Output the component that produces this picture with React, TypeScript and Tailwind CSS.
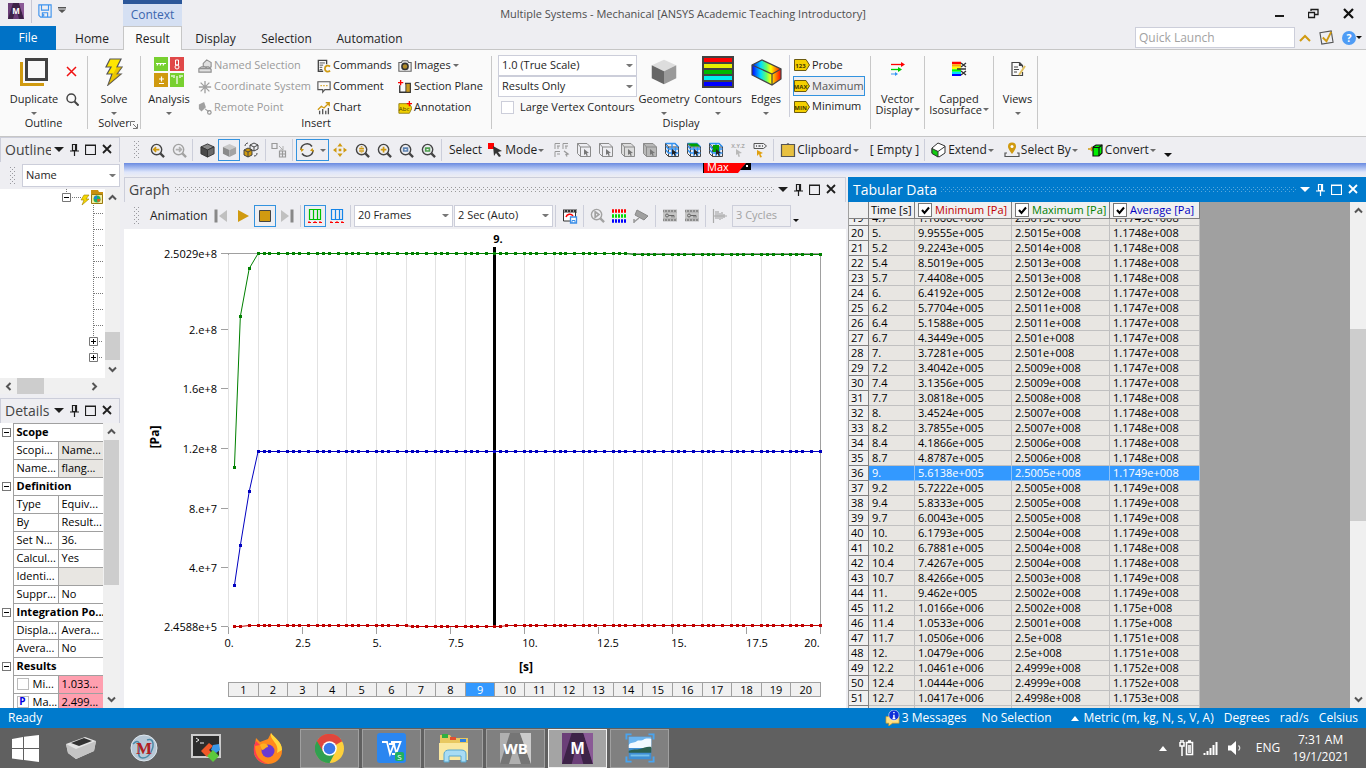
import React from "react";

type Kids = { children?: React.ReactNode };

/* ---------- small shared pieces ---------- */

const Caret = ({ c = "#6b6b6b", w = 6 }: { c?: string; w?: number }) => (
  <svg width={w} height={w / 2} viewBox="0 0 6 3" className="shrink-0" aria-hidden="true">
    <path d="M0 0h6L3 3z" fill={c} />
  </svg>
);

const Svg = ({ s = 16, w, h, vb, children }: Kids & { s?: number; w?: number; h?: number; vb?: string }) => (
  <svg width={w ?? s} height={h ?? s} viewBox={vb ?? "0 0 16 16"} fill="none" className="shrink-0" aria-hidden="true">
    {children}
  </svg>
);

const Grip = () => (
  <Svg w={5} h={18} vb="0 0 5 18">
    {[1, 5, 9, 13, 17].map((y) => (
      <path key={y} d={`M0 ${y - 0.5}h1M4 ${y - 0.5}h1M2 ${y + 1.5}h1`} stroke="#9a9aa0" />
    ))}
  </Svg>
);

const VSep = () => <div className="h-[22px] w-px shrink-0 bg-[#ccceda]" />;

const Pin = ({ c }: { c: string }) => (
  <Svg w={9} h={13} vb="0 0 9 13">
    <path d="M2.500 1.500h4v6h-4zM5.500 1v7M0 8h9M4.500 8v5" stroke={c} strokeWidth="1.200" />
  </Svg>
);

const Dots = ({ c }: { c: string }) => (
  <svg className="h-[5px] min-w-0 flex-1" aria-hidden="true">
    <defs>
      <pattern id={"d" + c.slice(1)} width="4" height="4" patternUnits="userSpaceOnUse">
        <path d="M0 .5h1M2 2.500h1" stroke={c} />
      </pattern>
    </defs>
    <rect width="100%" height="5" fill={`url(#d${c.slice(1)})`} />
  </svg>
);

const WinButtons = ({ c }: { c: string }) => (
  <div className="flex shrink-0 items-center gap-[6px]">
    <button aria-label="Panel menu"><Caret c={c} w={10} /></button>
    <button aria-label="Pin panel"><Pin c={c} /></button>
    <button aria-label="Maximize panel">
      <Svg w={11} h={11} vb="0 0 11 11"><path d="M.5 1.500h10v9H.5zM0 1h11" stroke={c} strokeWidth="1.200" /></Svg>
    </button>
    <button aria-label="Close panel">
      <Svg w={10} h={10} vb="0 0 10 10"><path d="M1 1l8 8M9 1L1 9" stroke={c} strokeWidth="1.800" /></Svg>
    </button>
  </div>
);

const Chev = ({ r = 0 }: { r?: number }) => (
  <Svg w={9} h={9} vb="0 0 9 9">
    <path d="M1 6.500L4.500 3 8 6.500" stroke="#555" strokeWidth="2" transform={`rotate(${r} 4.5 4.5)`} />
  </Svg>
);

/* ---------- icons ---------- */

const MLogo = ({ s }: { s: number }) => (
  <Svg s={s}>
    <rect width="16" height="16" fill="#6b3f78" />
    <path d="M5 0h6l5 16h-5L8 5 5 16H0z" fill="#3d2347" />
    <path d="M11 0h5v16z" fill="#8a5a96" />
    <text x="8" y="11" fontSize="8" fontWeight="700" textAnchor="middle" fill="#fff">M</text>
  </Svg>
);

const Cube = ({ s = 16, a = "#ddd", b = "#666", c = "#999", st = "none" }: { s?: number; a?: string; b?: string; c?: string; st?: string }) => (
  <Svg s={s}>
    <path d="M8 1l7 3.200L8 7.500 1 4.200z" fill={a} stroke={st} />
    <path d="M1 4.200l7 3.300V15l-7-3.500z" fill={b} stroke={st} />
    <path d="M15 4.200L8 7.500V15l7-3.500z" fill={c} stroke={st} />
  </Svg>
);

const Mag = ({ c = "#444", g = "", m = "#d09a10" }: { c?: string; g?: string; m?: string }) => (
  <Svg s={15}>
    <circle cx="7" cy="7" r="5.500" stroke={c} strokeWidth="1.500" />
    <path d="M11 11l4 4" stroke={c} strokeWidth="2.500" />
    {g && <path d={g} stroke={m} strokeWidth="1.800" />}
  </Svg>
);

const Frame = ({ fill = "none", c = "#8b8b8b", blue = false, green = "" }: { fill?: string; c?: string; blue?: boolean; green?: string }) => (
  <Svg>
    <path d="M1.500 1.500h9.500l3.500 3.500v9.500h-10l-3-3z" fill={fill} stroke={c} />
    <path d="M1.500 1.500l3 3.500h10M4.500 5v9.500" stroke={c} />
    {blue && <path d="M8 2v12M11.500 5v9M2 4l2.500 3h10M2 8l2.500 3h10M1.500 1.500H11l3.500 3.500" stroke="#3393f3" strokeWidth="1.400" />}
    {green && <path d={green} fill="#00a000" />}
    <path d="M8 7l5 4-2.200.300 1 2.200-1.200.500-1-2.200L8 13z" fill={blue ? "#222" : "#777"} />
  </Svg>
);

const Tag = ({ t }: { t: string }) => (
  <Svg w={16} h={12} vb="0 0 16 12">
    <path d="M.5.5h11.500l3.500 5.500-3.500 5.500H.5z" fill="#f5d000" stroke="#6b5a10" />
    <text x="6.500" y="8.500" fontSize="6" fontWeight="700" textAnchor="middle" fill="#443600">{t}</text>
  </Svg>
);

const Arrowed = ({ blue }: { blue?: boolean }) => (
  <Svg>
    <path d="M2.500 1.500h11v10h-11zM6.500 1v11M10.500 1v11" stroke={blue ? "#1484e8" : "#00c000"} strokeWidth="1.200" />
    <path d="M1 14.500h3M6 14.500h4M12 14.500h3M2 13v2M8 13v2M13 13v2" stroke="#f00" />
  </Svg>
);

const Film = ({ c = "#8c8c8c", save = false }: { c?: string; save?: boolean }) => (
  <Svg>
    {save ? (
      <>
        <path d="M1.500 2v11h12V2" fill="#fff" stroke={c} />
        <path d="M1 3h14" stroke={c} strokeWidth="3" />
        <path d="M2 3h13" stroke="#fff" strokeWidth="1" strokeDasharray="1 2" />
        <path d="M4 9c1-3 5-4 7-1" stroke="#f00" strokeWidth="1.500" />
        <path d="M8.500 9h6v6h-6z" fill="#fff" stroke="#3d8fe8" strokeWidth="1.300" />
        <path d="M10 15v-2.500h3V15" stroke="#3d8fe8" />
      </>
    ) : (
      <>
        <rect x="1" y="2" width="14" height="11" fill="#c4c4c4" />
        <path d="M1 3h14M1 12h14" stroke={c} strokeWidth="2.500" />
        <path d="M2 3h13M2 12h13" stroke="#e8e8e8" strokeWidth="1" strokeDasharray="1 2" />
        <circle cx="5" cy="7.500" r="1.500" stroke="#666" />
        <path d="M6.500 7.500H12v2M10 7.500v2" stroke="#666" />
      </>
    )}
  </Svg>
);

/* ---------- title bar and tabs ---------- */

function TitleBar() {
  return (
    <header className="shrink-0 bg-[#eeeef2]">
      <div className="flex h-[26px]">
        <div className="flex w-[182px] shrink-0 items-start">
          <div className="ml-2 mt-[3px]"><MLogo s={16} /></div>
          <div className="ml-[7px] h-[23px] w-px bg-[#c8c8d4]" />
          <button aria-label="Save" className="ml-[6px] mt-1">
            <Svg s={14}><path d="M1 1h14v14H3l-2-2zM4 1v6h8V1M5 15v-5h6v5M6.500 11v3" stroke="#3d93ee" strokeWidth="1.300" /></Svg>
          </button>
          <button aria-label="Customize" className="ml-[6px] mt-[7px]">
            <Svg w={8} h={6} vb="0 0 8 6"><path d="M0 0h8v1.500H0zM0 2.500h8L4 6z" fill="#555" /></Svg>
          </button>
          <div className="ml-auto flex h-full w-[59px] items-center justify-center border-t-4 border-[#2b579a] bg-[#d5e0f3] text-[12px] text-[#3b66ae]">Context</div>
        </div>
        <h1 className="flex-1 truncate text-center text-[11px] leading-[28px] text-[#4d4d4d]">
          Multiple Systems - Mechanical [ANSYS Academic Teaching Introductory]
        </h1>
        <div className="flex w-[182px] shrink-0 items-center justify-end gap-6 pr-3">
          <button aria-label="Minimize"><Svg w={9} h={10} vb="0 0 9 10"><path d="M0 8h9" stroke="#1b1b1b" strokeWidth="2" /></Svg></button>
          <button aria-label="Restore"><Svg w={11} h={11} vb="0 0 11 11"><path d="M.5 4.500h6v5h-6zM0 4.500h7M3 3V1.500h7v5H7M3 1.500h7" stroke="#1b1b1b" strokeWidth="1.300" /></Svg></button>
          <button aria-label="Close"><Svg w={11} h={11} vb="0 0 11 11"><path d="M1 1l9 9M10 1l-9 9" stroke="#111" strokeWidth="2.200" /></Svg></button>
        </div>
      </div>
      <nav className="flex h-6 items-stretch text-[12px] text-[#1e1e1e]">
        <button className="w-14 bg-[#0072c6] text-white">File</button>
        <button className="w-[67px] border-b border-[#c6c6c6] pt-[2px] pl-[5px]">Home</button>
        <button className="w-[59px] border border-b-0 border-[#c6c6c6] bg-[#fafafa]">Result</button>
        <button className="w-[67px] border-b border-[#c6c6c6] pt-[2px]">Display</button>
        <button className="w-[75px] border-b border-[#c6c6c6] pt-[2px]">Selection</button>
        <button className="w-[91px] border-b border-[#c6c6c6] pt-[2px]">Automation</button>
        <div className="flex flex-1 items-center justify-end border-b border-[#c6c6c6] pr-1">
          <input aria-label="Quick Launch" placeholder="Quick Launch" className="h-[21px] w-[160px] border border-[#ccceda] bg-white px-[3px] text-[12px] placeholder:text-[#a2a2a2]" />
          <button aria-label="Collapse ribbon" className="ml-1"><Svg w={12} h={8} vb="0 0 12 8"><path d="M1 7l5-5 5 5" stroke="#d09a10" strokeWidth="2" /></Svg></button>
          <button aria-label="Options" className="ml-2">
            <Svg s={15}><path d="M1 3l12-2 2 12-12 2z" stroke="#555" strokeWidth="1.200" /><path d="M4 8l4 4 5-10" stroke="#d09a10" strokeWidth="2" /></Svg>
          </button>
          <button aria-label="Help" className="ml-2 flex items-center">
            <Svg s={14}><circle cx="8" cy="8" r="8" fill="#4f9cf5" /><text x="8" y="12.500" fontSize="12" fontWeight="700" textAnchor="middle" fill="#fff">?</text></Svg>
            <Caret c="#111" w={6} />
          </button>
        </div>
      </nav>
    </header>
  );
}

/* ---------- ribbon ---------- */

const Group = ({ w, label, launcher, children }: Kids & { w: string; label?: string; launcher?: boolean }) => (
  <section className={"flex shrink-0 flex-col border-r border-[#c8c8c8] " + w}>
    <div className="flex h-[61px] shrink-0">{children}</div>
    {label && (
      <div className="relative text-center text-[11px] leading-3">
        {label}
        {launcher && (
          <span className="absolute right-[2px] bottom-0">
            <Svg s={8} vb="0 0 8 8"><path d="M.5 5V.5H5M3 3l4 4M7.500 3v4.500H3" stroke="#777" /></Svg>
          </span>
        )}
      </div>
    )}
  </section>
);

const Big = ({ icon, label, w }: { icon: React.ReactNode; label: string; w: string }) => (
  <button className={"flex shrink-0 flex-col items-center text-[11px] leading-[14px] " + w}>
    <span className="flex h-8 items-center">{icon}</span>
    <span className="mt-1 whitespace-nowrap">{label}</span>
    <span className="mt-[6px]"><Caret /></span>
  </button>
);

const Two = ({ icon, a, b }: { icon: React.ReactNode; a: string; b: string }) => (
  <button className="flex w-full flex-col items-center text-[11px] leading-[11px]">
    <span className="flex h-[26px] items-center">{icon}</span>
    <span className="mt-[11px]">{a}</span>
    <span className="flex items-center gap-px">{b}<Caret /></span>
  </button>
);

const Small = ({ icon, label, off, on, drop }: { icon: React.ReactNode; label: string; off?: boolean; on?: boolean; drop?: boolean }) => (
  <button className={"flex h-[21px] items-center gap-[2px] border text-[11px] whitespace-nowrap " + (off ? "text-[#9b9b9b] " : "text-[#1e1e1e] ") + (on ? "border-[#3393df] bg-[#eeeef2] !text-[#555]" : "border-transparent")}>
    {icon}
    {label}
    {drop && <Caret />}
  </button>
);

const Combo = ({ v, w, label, off }: { v: string; w: string; label: string; off?: boolean }) => (
  <div className={"relative flex shrink-0 items-center " + w}>
    <select aria-label={label} disabled={off} className={"h-full w-full appearance-none border border-[#ccceda] px-[3px] text-[11px] " + (off ? "bg-[#eeeef2] text-[#a2a2a2]" : "bg-white text-[#1e1e1e]")}>
      <option>{v}</option>
    </select>
    {!off && <span className="pointer-events-none absolute right-1"><Caret c="#777" w={7} /></span>}
  </div>
);

function Ribbon() {
  return (
    <div className="flex h-[87px] shrink-0 overflow-hidden border-b border-[#c6c6c6] bg-[#fafafa] pt-[6px] pb-[7px] text-[#1e1e1e]">
      <Group w="w-[88px]" label="Outline">
        <Big w="w-[60px] pl-2" label="Duplicate" icon={
          <Svg w={28} h={28} vb="0 0 28 28"><path d="M1.500 4v22.500H24" stroke="#d09a10" strokeWidth="3" /><rect x="6.500" y="1.500" width="20" height="20" fill="#fafafa" stroke="#424242" strokeWidth="3" /></Svg>} />
        <div className="flex flex-col gap-4 pt-[10px] pl-[6px]">
          <button aria-label="Delete"><Svg w={12} h={11} vb="0 0 12 11"><path d="M1 1l9 9M10 1l-9 9" stroke="#f01010" strokeWidth="1.500" /></Svg></button>
          <button aria-label="Find"><Svg s={13}><circle cx="6.500" cy="6.500" r="5.300" stroke="#444" strokeWidth="1.800" /><path d="M10.500 10.500l5 5" stroke="#444" strokeWidth="2.500" /></Svg></button>
        </div>
      </Group>
      <Group w="w-[53px]" label="Solver" launcher>
        <Big w="w-full" label="Solve" icon={
          <Svg w={18} h={28} vb="0 0 18 28"><path d="M5 1h11l-4 8h5l-5 7h4L3 27l4-11H2l4-7H1z" fill="#ffe600" stroke="#555" strokeWidth="1.200" /><path d="M12 9h5l-5 7h4L3 27l5-11z" fill="#d8a800" opacity=".5" /></Svg>} />
      </Group>
      <Group w="w-[351px]" label="Insert">
        <Big w="w-14" label="Analysis" icon={
          <Svg w={30} h={30} vb="0 0 30 30">
            <path d="M0 0h14v14H0z" fill="#78d030" /><path d="M16 0h14v14H16z" fill="#e04848" /><path d="M0 16h14v14H0z" fill="#d09a10" /><path d="M16 16h14v14H16z" fill="#78d030" />
            <path d="M2 6.500h10M3 8.500l1-2M6 8.500l1-2M9 8.500l1-2M5 22h5M7.500 19.500v5M5 26.500h5M23 19v8M20 18v3M26 18v3M18 18v2M28 18v2" stroke="#fff" strokeWidth="1.200" />
            <path d="M21.500 3h3v5h-3z" stroke="#fff" /><circle cx="23" cy="10" r="2" stroke="#fff" />
          </Svg>} />
        <div className="-mt-px w-[119px] text-left">
          <Small off label="Named Selection" icon={<Svg s={14}><path d="M1 15v-4l3-2h8l3 3v3zM1 11h14M6 5l4-4 5 3v5l-4 2-5-3z" stroke="#909090" strokeWidth="1.300" fill="#e0e0e0" /></Svg>} />
          <Small off label="Coordinate System" icon={<Svg s={14}><path d="M8 1v14M1 8h14M3 3l10 10M13 3L3 13" stroke="#a0a0a0" strokeWidth="1.500" /></Svg>} />
          <Small off label="Remote Point" icon={<Svg s={14}><path d="M1 4l6-3 2 6-5 5-3-3z" fill="#a0a0a0" /><path d="M8 9l4 3" stroke="#a0a0a0" strokeWidth="1.300" /><circle cx="13" cy="13" r="2" stroke="#909090" strokeWidth="1.300" /></Svg>} />
        </div>
        <div className="-mt-px w-[81px]">
          <Small label="Commands" icon={<Svg s={14}><path d="M7 14H1.500V1.500H11V6" stroke="#444" strokeWidth="1.500" /><path d="M3 4.500h6M3 7h4M3 9.500h3M3 12h3" stroke="#444" /><path d="M15 8.500c-3-2-6-.500-6 2.500s3 4.500 6 2.500" stroke="#d09a10" strokeWidth="2" /></Svg>} />
          <Small label="Comment" icon={<Svg s={14}><path d="M1 2h14v9H9l-2.500 3v-3H1z" stroke="#555" strokeWidth="1.300" /><path d="M4 6.500h1.500M7.200 6.500h1.500M10.500 6.500H12" stroke="#d09a10" strokeWidth="1.500" /></Svg>} />
          <Small label="Chart" icon={<Svg s={14}><path d="M3 15v-4M6.500 15V9M10 15v-4M13 15V8" stroke="#555" strokeWidth="1.500" /><path d="M1 10l4-4 3 2 6-6M10 2h4v4" stroke="#d09a10" strokeWidth="1.500" /></Svg>} />
        </div>
        <div className="-mt-px">
          <Small drop label="Images" icon={<Svg s={14}><path d="M1 4h3l1-2h6l1 2h3v10H1z" stroke="#666" strokeWidth="1.300" fill="#f4f4f4" /><circle cx="8" cy="8.500" r="3.500" fill="#b08a28" stroke="#333" strokeWidth="1.800" /></Svg>} />
          <Small label="Section Plane" icon={<Svg s={14}><path d="M2 6v8h12V4H8" stroke="#333" strokeWidth="1.500" /><path d="M9 4h5v10H9z" fill="#c89a20" stroke="#333" /><path d="M0 3h6M3 0v6" stroke="#f00" strokeWidth="1.500" /></Svg>} />
          <Small label="Annotation" icon={<Svg s={14}><path d="M1 3h12l3 5-3 6H1z" fill="#f0d000" stroke="#907a10" /><text x="7" y="11.500" fontSize="7" textAnchor="middle" fill="#443600">Abc</text><path d="M10 3h6M13 0v6" stroke="#f00" strokeWidth="1.500" /></Svg>} />
        </div>
      </Group>
      <Group w="w-[379px]" label="Display">
        <div className="-mt-px ml-[6px] w-[139px] shrink-0">
          <Combo label="Result scale" w="h-[21px]" v="1.0 (True Scale)" />
          <Combo label="Result set" w="h-[21px]" v="Results Only" />
          <label className="flex h-[21px] items-center gap-[6px] pl-[3px] text-[11px] whitespace-nowrap">
            <input type="checkbox" className="h-[13px] w-[13px] shrink-0 appearance-none border border-[#ccceda] bg-white" />
            Large Vertex Contours
          </label>
        </div>
        <Big w="w-[54px]" label="Geometry" icon={<Cube s={28} />} />
        <Big w="w-[54px]" label="Contours" icon={
          <Svg w={32} h={32} vb="0 0 32 32"><path d="M0 0h32v32H0z" fill="#424242" /><path d="M2 4h28" stroke="#f00" strokeWidth="4" /><path d="M2 10h28" stroke="#e8f000" strokeWidth="4" /><path d="M2 16h28" stroke="#00b800" strokeWidth="4" /><path d="M2 22h28" stroke="#00f0f0" strokeWidth="4" /><path d="M2 28h28" stroke="#00f" strokeWidth="4" /></Svg>} />
        <Big w="w-[42px]" label="Edges" icon={
          <Svg w={31} h={27} vb="0 0 31 27">
            <defs><linearGradient id="edg"><stop offset="0" stopColor="#00f" /><stop offset=".3" stopColor="#0df" /><stop offset=".5" stopColor="#6f6" /><stop offset=".65" stopColor="#ff0" /><stop offset="1" stopColor="#f00" /></linearGradient></defs>
            <path d="M1 6l10-5 19 9v10l-9 6-20-10z" fill="url(#edg)" stroke="#444" strokeWidth="1.200" /><path d="M1 6l20 9 9-5M21 15v11" stroke="#444" strokeWidth="1.200" />
          </Svg>} />
        <div className="ml-[2px] -mt-px flex flex-col border-l border-[#ccceda] pl-[3px]">
          <Small label="Probe" icon={<Tag t="123" />} />
          <Small on label="Maximum" icon={<Tag t="MAX" />} />
          <Small label="Minimum" icon={<Tag t="MIN" />} />
        </div>
      </Group>
      <Group w="w-[54px]">
        <Two a="Vector" b="Display" icon={<Svg><path d="M1 3.500h12" stroke="#f00" strokeWidth="1.300" /><path d="M11 1l4 2.500L11 6z" fill="#f00" /><path d="M1 8.500h8" stroke="#0c0" strokeWidth="1.300" /><path d="M8 6l4 2.500L8 11z" fill="#0c0" /><path d="M1 13h5" stroke="#3393f3" /><path d="M5 11l3 2-3 2z" fill="#3393f3" /></Svg>} />
      </Group>
      <Group w="w-[69px]">
        <Two a="Capped" b="Isosurface" icon={<Svg><path d="M1 2h9" stroke="#f00" strokeWidth="2.500" /><path d="M1 4.500h9" stroke="#fa0" strokeWidth="2.500" /><path d="M1 7h9" stroke="#ff0" strokeWidth="2.500" /><path d="M1 9.500h9" stroke="#0f0" strokeWidth="2.500" /><path d="M1 12h9" stroke="#0df" strokeWidth="2.500" /><path d="M1 14h9" stroke="#00f" strokeWidth="2" /><path d="M10 2l5 4M15 2l-5 4M10 10l5 4M15 10l-5 4M6 8h9" stroke="#333" strokeWidth="1.300" /></Svg>} />
      </Group>
      <Group w="w-[44px]">
        <Big w="w-full pl-1" label="Views" icon={<span className="pb-[6px]"><Svg><path d="M9.500 1.500H2v13h10.500V11M9.500 1.500l3 3M9.500 1.500v3h3v2M4 6h4M4 8.500h5M4 11h3" stroke="#444" strokeWidth="1.200" /><path d="M9 14l6-9" stroke="#e0c060" strokeWidth="2" /></Svg></span>} />
      </Group>
    </div>
  );
}

/* ---------- graphics toolbar ---------- */

const Tb = ({ icon, on, name }: { icon: React.ReactNode; on?: boolean; name: string }) => (
  <button aria-label={name} className={"flex h-[22px] w-[22px] shrink-0 items-center justify-center border " + (on ? "border-[#3393df]" : "border-transparent")}>
    {icon}
  </button>
);

const TextDrop = ({ icon, label, drop = true }: { icon?: React.ReactNode; label: string; drop?: boolean }) => (
  <button className="flex shrink-0 items-center gap-px text-[12px] whitespace-nowrap text-[#1e1e1e]">
    {icon}{label}{drop && <Caret />}
  </button>
);

function ViewToolbar() {
  return (
    <div className="flex h-[26px] shrink-0 items-center overflow-hidden bg-[#eeeef2] pl-[10px]">
      <Grip />
      <div className="w-[7px]" />
      <Tb name="Zoom previous" icon={<Mag g="M10 7H4M6.500 4.500L4 7l2.500 2.500" />} />
      <Tb name="Zoom next" icon={<Mag c="#a2a2a2" g="M4 7h6M7.500 4.500L10 7 7.500 9.500" m="#b0b0b0" />} />
      <div className="w-[2px]" /><VSep /><div className="w-[3px]" />
      <Tb name="Shaded exterior and edges" icon={<Cube s={15} a="#888" b="#4a4a4a" c="#6a6a6a" st="#333" />} />
      <Tb on name="Shaded exterior" icon={<Cube s={15} a="#c8c8c8" b="#8a8a8a" c="#a4a4a4" />} />
      <Tb name="Wireframe" icon={<Svg><path d="M7 3l4-2 4 2v4l-4 2-4-2zM7 3l4 2 4-2M11 5v4" stroke="#444" /><path d="M1 8l4-2 4 2v5l-4 2-4-2z" fill="#d09a10" stroke="#444" /><path d="M1 8l4 2 4-2M5 10v5M2 4c0-2 2-3 3-3M14 11c0 2-1 3-3 3" stroke="#444" /></Svg>} />
      <div className="w-[3px]" /><VSep /><div className="w-[2px]" />
      <Tb name="Manage views" icon={<Svg><path d="M1 1.500h5v5H1zM8.500 9h6v6h-6zM11.500 9v6M8.500 12h6" stroke="#999" strokeWidth="1.200" /><path d="M8 4l4 4M12 4v4H9" stroke="#b0b0b0" /></Svg>} />
      <div className="w-[2px]" /><VSep /><div className="w-[3px]" />
      <button aria-label="Rotate" className="flex h-[22px] w-[33px] shrink-0 items-center justify-between border border-[#3393df] px-[2px]">
        <Svg><path d="M2 8a6 6 0 0 1 11-3.500M14 8a6 6 0 0 1-11 3.500" stroke="#444" strokeWidth="1.500" /><path d="M1 6l1.500 4L5 7.500zM15 10l-1.500-4L11 8.500z" fill="#d09a10" /></Svg>
        <Caret />
      </button>
      <Tb name="Pan" icon={<Svg s={14}><path d="M8 0l3 4H5zM8 16l3-4H5zM0 8l4-3v6zM16 8l-4-3v6zM6.500 6.500h3v3h-3z" fill="#d09a10" /></Svg>} />
      <Tb name="Zoom" icon={<Mag g="M4.500 6h5M4.500 8.500h5M7 3.500v1M7 10v1" />} />
      <Tb name="Box zoom" icon={<Mag g="M4 7h6M7 4v6" />} />
      <Tb name="Fit" icon={<Mag g="M5 5.500h4v3H5z" m="#5d84b4" />} />
      <Tb name="Toggle magnifier" icon={<Mag g="M5 5.500h4v3H5z" m="#4fa04f" />} />
      <div className="w-[2px]" /><VSep /><div className="w-[7px]" />
      <span className="shrink-0 text-[12px] text-[#1e1e1e]">Select</span>
      <div className="w-[6px]" />
      <TextDrop label="Mode" icon={<Svg><path d="M0 1h6v6H0z" fill="#f00" /><path d="M5 4l9 5-4 1 3 4-2 1-3-4-2 3z" fill="#333" /></Svg>} />
      <div className="w-[7px]" />
      <Tb name="Smart select" icon={<Svg><path d="M1 7V1.500h5M9 7V1.500h5M1 15v-5.500h5M3 4h3M11 4h3M3 12h3M4 7V4M12 7V4" stroke="#999" /><path d="M10 9l4 3-2 .5 1 2" stroke="#999" strokeWidth="1.300" /></Svg>} />
      <Tb name="Vertex" icon={<Frame />} />
      <Tb name="Edge" icon={<Frame />} />
      <Tb name="Face" icon={<Frame fill="#dcdcdc" />} />
      <Tb name="Body" icon={<Frame fill="#b8b8b8" />} />
      <Tb name="Node" icon={<Frame c="#444" blue />} />
      <Tb name="Element face" icon={<Frame c="#444" blue green="M2 1.500h9l3 3H5z" />} />
      <Tb name="Element" icon={<Frame c="#444" blue green="M5 3h6v7H5z" />} />
      <Tb name="Coordinates" icon={<Svg><text x="8" y="5.500" fontSize="5.500" fontWeight="700" textAnchor="middle" fill="#aaa">X.Y.Z</text><path d="M6 7l6 4-3 .5 1 3-1.500.500-1-3L6 13z" fill="#b8b8b8" /></Svg>} />
      <Tb name="Label" icon={<Svg><path d="M2 1.500h9.500l3 2.500-3 2.500H2z" stroke="#555" /><path d="M4 4h1M6.500 4h2M10 4h1" stroke="#555" strokeWidth="1.500" /><path d="M5 8l6 3-2.500 1 1.500 3-2 .5L7 12l-2 2z" fill="#e0a010" /></Svg>} />
      <div className="w-[2px]" /><VSep /><div className="w-[6px]" />
      <TextDrop label="Clipboard" icon={<Svg><path d="M1.500 2.500h13v12h-13z" fill="#e8c040" stroke="#555" strokeWidth="1.200" /><path d="M5 3h6l-3-2z" fill="#555" /></Svg>} />
      <div className="w-[11px]" />
      <TextDrop label="[ Empty ]" drop={false} />
      <div className="w-[5px]" /><VSep /><div className="w-[6px]" />
      <TextDrop label="Extend" icon={<Svg><path d="M1 6l6-5 7 3v7l-6 4-7-4z" stroke="#333" fill="#fff" /><path d="M1 6.500l6 3V15l-6-3.500z" fill="#1c1" stroke="#333" /><path d="M7 9.500l7-5" stroke="#333" /></Svg>} />
      <div className="w-[10px]" />
      <TextDrop label="Select By" icon={<Svg><path d="M3 11H1v3.500h14V11h-2" stroke="#555" strokeWidth="1.200" /><path d="M8 12C4 7 4 5 4 4.500a4 4 0 0 1 8 0C12 5 12 7 8 12z" fill="#d09a10" /><circle cx="8" cy="4.500" r="1.500" fill="#fff" /></Svg>} />
      <div className="w-[10px]" />
      <TextDrop label="Convert" icon={<Svg><path d="M0 7h4M3 5l2 2-2 2" stroke="#d09a10" strokeWidth="1.300" /><path d="M5 5l3-2h6v8l-3 3H5z" fill="#0e0" stroke="#111" strokeWidth="1.200" /><path d="M5 5.500h6V14M11 5.500l3-2.500" stroke="#111" strokeWidth="1.200" /></Svg>} />
      <div className="w-[8px]" />
      <button aria-label="More tools" className="mt-[10px]"><Caret c="#111" w={8} /></button>
    </div>
  );
}

/* ---------- left side: outline and details ---------- */

const PanelHead = ({ title }: { title: string }) => (
  <div className="flex h-[25px] shrink-0 items-center border border-b-0 border-[#ccceda] bg-[#eeeef2] pb-[2px] pl-1 text-[#444]">
    <span className="w-[46px] shrink-0 overflow-hidden text-[14px] whitespace-nowrap">{title}</span>
    <div className="ml-[3px]"><WinButtons c="#1e1e1e" /></div>
  </div>
);

function OutlinePanel() {
  return (
    <div className="flex h-[257px] shrink-0 flex-col">
      <PanelHead title="Outline" />
      <div className="flex h-[27px] shrink-0 items-center bg-[#eeeef2] pl-[10px]">
        <Grip />
        <Combo label="Outline filter" w="ml-[7px] h-[23px] w-[98px]" v="Name" />
      </div>
      <div className="flex h-[189px] bg-white">
        <div className="flex-1">
          <svg width="104" height="189" viewBox="0 189 104 189" aria-hidden="true">
            <path d="M66.500 189v4M72 197.500h9M93.500 205v132M93.500 347v6M94 213.500h9M94 229.500h9M94 245.500h9M94 261.500h9M94 277.500h9M94 293.500h9M94 309.500h9M94 325.500h9M99 341.500h4M99 357.500h4" stroke="#777" strokeDasharray="1 1" />
            <path d="M62.500 193.500h8v8h-8zM89.500 337.500h8v8h-8zM89.500 353.500h8v8h-8z" fill="#fff" stroke="#777" />
            <path d="M64 197.500h5M91 341.500h5M91 357.500h5M93.500 339v5M93.500 355v5" stroke="#000" />
            <path d="M84 195h5l-3 4h3l-7 6 2-5h-3z" fill="#f5d800" stroke="#a08000" strokeWidth=".6" />
            <path d="M91 190h7l1 2h4v4H91z" fill="#c89010" />
            <path d="M91.500 194.500h11v9h-11z" fill="#f5eca0" stroke="#9a7a10" />
            <circle cx="97" cy="199" r="3.500" fill="#20b060" /><path d="M94 199a3 3 0 0 1 3-3.500v3.500z" fill="#2080e0" /><path d="M97 199h3.500a3 3 0 0 1-3 3z" fill="#e06020" />
          </svg>
        </div>
        <div className="flex w-[15px] flex-col items-center bg-[#f0f0f0] pt-1 pb-1">
          <Chev />
          <div className="mt-auto mb-[5px] h-7 w-full bg-[#cdcdcd]" />
          <Chev r={180} />
        </div>
      </div>
      <div className="flex h-4 items-center bg-[#f0f0f0]">
        <div className="ml-1"><Chev r={-90} /></div>
        <div className="ml-1 h-full w-[27px] bg-[#cdcdcd]" />
        <div className="ml-[46px]"><Chev r={90} /></div>
      </div>
    </div>
  );
}

type Detail = { h?: string; a?: string; b?: string; k?: "grey" | "pink"; box?: string };
const DETAILS: Detail[] = [
  { h: "Scope" },
  { a: "Scopi...", b: "Name...", k: "grey" },
  { a: "Name...", b: "flang...", k: "grey" },
  { h: "Definition" },
  { a: "Type", b: "Equiv..." },
  { a: "By", b: "Result..." },
  { a: "Set N...", b: "36." },
  { a: "Calcul...", b: "Yes" },
  { a: "Identi...", b: "", k: "grey" },
  { a: "Suppr...", b: "No" },
  { h: "Integration Po..." },
  { a: "Displa...", b: "Avera..." },
  { a: "Avera...", b: "No" },
  { h: "Results" },
  { a: "Mi...", b: "1.033...", k: "pink", box: " " },
  { a: "Ma...", b: "2.499...", k: "pink", box: "P" },
];

function DetailsPanel() {
  return (
    <div className="flex min-h-0 flex-1 flex-col">
      <PanelHead title="Details" />
      <div className="flex min-h-0 flex-1 items-stretch overflow-hidden bg-[#f0f0f0]">
        <div className="w-[103px] overflow-hidden bg-white">
          <table className="w-[103px] table-fixed border-collapse text-[11px] leading-[15px] text-black">
            <colgroup><col className="w-[13px]" /><col className="w-[45px]" /><col className="w-[45px]" /></colgroup>
            <tbody>
              {DETAILS.map((d, i) =>
                d.h ? (
                  <tr key={i} className="h-[18px]">
                    <td className="p-0">
                      <button aria-label={"Collapse " + d.h} className="ml-[2px] flex h-[9px] w-[9px] items-center justify-center border border-[#777] bg-white"><span className="h-px w-[5px] bg-black" /></button>
                    </td>
                    <th colSpan={2} className="overflow-hidden border border-[#a0a0a0] p-0 pb-[2px] pl-[3px] text-left whitespace-nowrap">{d.h}</th>
                  </tr>
                ) : (
                  <tr key={i} className="h-[18px]">
                    <td className="p-0" />
                    <td className="overflow-hidden border border-[#a0a0a0] p-0 pb-[2px] pl-[3px] whitespace-nowrap">
                      {d.box ? (
                        <span className="flex items-center gap-1">
                          <span className="flex h-3 w-3 shrink-0 items-center justify-center border border-[#bbb] text-[10px] font-bold text-[#0000e0]">{d.box}</span>
                          {d.a}
                        </span>
                      ) : d.a}
                    </td>
                    <td className={"overflow-hidden border border-[#a0a0a0] p-0 pb-[2px] pl-[3px] whitespace-nowrap " + (d.k === "grey" ? "bg-[#e8e6e2]" : d.k === "pink" ? "bg-[#ff9faf]" : "")}>{d.b}</td>
                  </tr>
                )
              )}
            </tbody>
          </table>
        </div>
        <div className="ml-px flex w-[15px] flex-col items-center pt-1 pb-1">
          <Chev />
          <div className="mt-1 h-[145px] w-full bg-[#cdcdcd]" />
          <div className="mt-auto"><Chev r={180} /></div>
        </div>
      </div>
    </div>
  );
}

/* ---------- graph ---------- */

const X0 = 228.5;
const UNIT = 29.6;
const TIMES: number[] = [];
for (let n = 0; n < 20; n++) for (const f of [0.2, 0.4, 0.7, 1]) TIMES.push(n + f);

const green = (t: number) => (t < 0.3 ? 467.5 : t < 0.5 ? 316.5 : t < 0.8 ? 268.5 : t < 13.6 ? 253.5 : 254.5);
const blue = (t: number) => (t < 0.3 ? 585.5 : t < 0.5 ? 545.5 : t < 0.8 ? 491.5 : 451.5);
const red = (t: number) => (t < 0.5 || (t > 6.1 && t < 9.3) ? 626.5 : 625.5);

const Series = ({ f, c }: { f: (t: number) => number; c: string }) => (
  <g>
    <polyline fill="none" stroke={c} points={TIMES.map((t) => `${X0 + t * UNIT},${f(t)}`).join(" ")} />
    {TIMES.map((t) => (
      <rect key={t} x={Math.round(X0 + t * UNIT - 1.5)} y={f(t) - 1.5} width="3" height="3" fill={c} />
    ))}
  </g>
);

const YT: [number, string][] = [[253.5, "2.5029e+8"], [329.5, "2.e+8"], [388.5, "1.6e+8"], [448.5, "1.2e+8"], [508.5, "8.e+7"], [567.5, "4.e+7"], [626.5, "2.4588e+5"]];
const XT: [number, string, number][] = [[0, "0.", 229], [2.5, "2.5", 303], [5, "5.", 377], [7.5, "7.5", 456], [10, "10.", 530], [12.5, "12.5", 608], [15, "15.", 679], [17.5, "17.5", 757], [20, "20.", 812]];

function Graph() {
  return (
    <section className="flex min-w-0 flex-1 flex-col bg-white">
      <div className="flex h-[25px] shrink-0 items-center border border-b-0 border-[#ccceda] bg-[#eeeef2] pr-[9px] pb-[2px] pl-1 text-[#444]">
        <span className="text-[14px]">Graph</span>
        <div className="ml-[5px] flex min-w-0 flex-1 items-center pr-1"><Dots c="#999999" /></div>
        <WinButtons c="#1e1e1e" />
      </div>
      <div className="flex h-[27px] shrink-0 items-center overflow-hidden bg-[#eeeef2] pl-[10px]">
        <Grip />
        <span className="ml-[11px] w-[60px] shrink-0 text-[12px] text-[#1e1e1e]">Animation</span>
        <Tb name="Previous frame" icon={<Svg><path d="M3 1.500v13" stroke="#888" strokeWidth="3" /><path d="M14 2v12L6 8z" fill="#c0c0c0" /></Svg>} />
        <Tb name="Play" icon={<Svg><path d="M3 2l11 6-11 6z" fill="#d09a10" /></Svg>} />
        <Tb on name="Stop" icon={<Svg><path d="M2.500 2.500h11v11h-11z" fill="#d09a10" stroke="#444" /></Svg>} />
        <Tb name="Next frame" icon={<Svg><path d="M13 1.500v13" stroke="#888" strokeWidth="3" /><path d="M2 2v12l8-6z" fill="#c0c0c0" /></Svg>} />
        <div className="w-[2px]" /><VSep /><div className="w-[3px]" />
        <Tb on name="Distributed" icon={<Arrowed />} />
        <Tb name="Result sets" icon={<Arrowed blue />} />
        <div className="w-[2px]" /><VSep /><div className="w-[3px]" />
        <Combo label="Frames" w="h-[22px] w-[99px]" v="20 Frames" />
        <div className="w-px" />
        <Combo label="Duration" w="h-[22px] w-[99px]" v="2 Sec (Auto)" />
        <div className="w-[2px]" /><VSep /><div className="w-[3px]" />
        <Tb name="Export video" icon={<Film c="#333" save />} />
        <div className="w-[2px]" /><VSep /><div className="w-[2px]" />
        <Tb name="Zoom to fit" icon={<Mag c="#a2a2a2" g="M5.500 4l4 3-4 3z" m="#a2a2a2" />} />
        <Tb name="Time contours" icon={<Svg><path d="M1 3h14" stroke="#f00" strokeWidth="3.500" strokeDasharray="2 1" /><path d="M1 8h14" stroke="#0d0" strokeWidth="3.500" strokeDasharray="2 1" /><path d="M1 13h14" stroke="#00f" strokeWidth="3.500" strokeDasharray="2 1" /></Svg>} />
        <Tb name="Camera" icon={<Svg><path d="M4 2l11 6-4 4L2 7z" fill="#a0a0a0" stroke="#888" /><path d="M6 10l-5 4M1 11v4" stroke="#999" strokeWidth="1.500" /></Svg>} />
        <div className="w-[3px]" /><VSep /><div className="w-[3px]" />
        <Tb name="Insert key frame" icon={<Film />} />
        <Tb name="Delete key frame" icon={<Film />} />
        <div className="w-[2px]" /><VSep /><div className="w-[3px]" />
        <Tb name="Cycles" icon={<Svg><path d="M1.500 1v14M1 8h14M4 3v8M6 3v8M8 5v7M10 4v7M12 6v4" stroke="#aaa" strokeWidth="1.200" /></Svg>} />
        <div className="w-px" />
        <Combo off label="Cycle count" w="h-[22px] w-[59px]" v="3 Cycles" />
        <button aria-label="More" className="mt-[10px] ml-[2px]"><Caret c="#111" w={6} /></button>
      </div>
      <div className="flex min-h-0 flex-1 flex-col overflow-hidden">
        <svg viewBox="124 229 722 453" className="w-full shrink-0" role="img" aria-label="Stress against time" fontSize="11">
          {Array.from({ length: 20 }, (_, i) => (
            <path key={i} d={`M${Math.round(X0 + i * UNIT - 0.5) + 0.5} 254v373`} stroke="#e2e2e2" />
          ))}
          <path d="M221 253.500h600M820.500 254v380M228.500 254v1" stroke="#a0a0a0" />
          {YT.map(([y, l]) => (
            <g key={l}>
              <path d={`M221 ${y}h7`} stroke="#a0a0a0" />
              <text x="217" y={y + 4.5} textAnchor="end">{l}</text>
            </g>
          ))}
          {XT.map(([t, l, x]) => (
            <g key={l}>
              <path d={`M${Math.round(X0 + t * UNIT - 0.5) + 0.5} 627v7`} stroke="#a0a0a0" />
              <text x={x} y="647" textAnchor="middle">{l}</text>
            </g>
          ))}
          <path d="M494.500 247v380" stroke="#000" strokeWidth="3" />
          <Series f={green} c="#008000" />
          <Series f={blue} c="#0000c0" />
          <Series f={red} c="#c00000" />
          <text x="498" y="243" textAnchor="middle" fontWeight="700">9.</text>
          <text x="526" y="671" textAnchor="middle" fontWeight="700" fontSize="12">[s]</text>
          <text transform="translate(159 437) rotate(-90)" textAnchor="middle" fontWeight="700" fontSize="12">[Pa]</text>
        </svg>
        <div className="mr-[25px] ml-[104px] grid h-[15px] shrink-0 grid-cols-20 border-y border-l border-[#a0a0a0]">
          {Array.from({ length: 20 }, (_, i) => (
            <button key={i} className={"border-r border-[#a0a0a0] text-center text-[11px] leading-[12px] " + (i === 8 ? "bg-[#3399ff] text-white" : "bg-[#f0f0f0] text-black")}>{i + 1}</button>
          ))}
        </div>
      </div>
    </section>
  );
}

/* ---------- tabular data ---------- */

const ROWS: [string, string, string, string][] = [
  ["4.7", "1.1066e+006", "2.5015e+008", "1.1749e+008"],
  ["5.", "9.9555e+005", "2.5015e+008", "1.1748e+008"],
  ["5.2", "9.2243e+005", "2.5014e+008", "1.1748e+008"],
  ["5.4", "8.5019e+005", "2.5013e+008", "1.1748e+008"],
  ["5.7", "7.4408e+005", "2.5013e+008", "1.1748e+008"],
  ["6.", "6.4192e+005", "2.5012e+008", "1.1747e+008"],
  ["6.2", "5.7704e+005", "2.5011e+008", "1.1747e+008"],
  ["6.4", "5.1588e+005", "2.5011e+008", "1.1747e+008"],
  ["6.7", "4.3449e+005", "2.501e+008", "1.1747e+008"],
  ["7.", "3.7281e+005", "2.501e+008", "1.1747e+008"],
  ["7.2", "3.4042e+005", "2.5009e+008", "1.1747e+008"],
  ["7.4", "3.1356e+005", "2.5009e+008", "1.1747e+008"],
  ["7.7", "3.0818e+005", "2.5008e+008", "1.1748e+008"],
  ["8.", "3.4524e+005", "2.5007e+008", "1.1748e+008"],
  ["8.2", "3.7855e+005", "2.5007e+008", "1.1748e+008"],
  ["8.4", "4.1866e+005", "2.5006e+008", "1.1748e+008"],
  ["8.7", "4.8787e+005", "2.5006e+008", "1.1748e+008"],
  ["9.", "5.6138e+005", "2.5005e+008", "1.1749e+008"],
  ["9.2", "5.7222e+005", "2.5005e+008", "1.1749e+008"],
  ["9.4", "5.8333e+005", "2.5005e+008", "1.1749e+008"],
  ["9.7", "6.0043e+005", "2.5005e+008", "1.1749e+008"],
  ["10.", "6.1793e+005", "2.5004e+008", "1.1749e+008"],
  ["10.2", "6.7881e+005", "2.5004e+008", "1.1748e+008"],
  ["10.4", "7.4267e+005", "2.5004e+008", "1.1748e+008"],
  ["10.7", "8.4266e+005", "2.5003e+008", "1.1749e+008"],
  ["11.", "9.462e+005", "2.5002e+008", "1.1749e+008"],
  ["11.2", "1.0166e+006", "2.5002e+008", "1.175e+008"],
  ["11.4", "1.0533e+006", "2.5001e+008", "1.175e+008"],
  ["11.7", "1.0506e+006", "2.5e+008", "1.1751e+008"],
  ["12.", "1.0479e+006", "2.5e+008", "1.1751e+008"],
  ["12.2", "1.0461e+006", "2.4999e+008", "1.1752e+008"],
  ["12.4", "1.0444e+006", "2.4999e+008", "1.1752e+008"],
  ["12.7", "1.0417e+006", "2.4998e+008", "1.1753e+008"],
];

const HeadCheck = ({ label, c }: { label: string; c: string }) => (
  <th className="border-r border-b border-[#808080] bg-[#f0f0f0] p-0 font-normal">
    <label className={"flex items-center gap-[3px] pl-[3px] whitespace-nowrap " + c}>
      <span className="relative flex h-[14px] w-[14px] shrink-0">
        <input type="checkbox" defaultChecked className="h-full w-full appearance-none border border-[#777] bg-white" />
        <span className="pointer-events-none absolute inset-0 flex items-center justify-center">
          <Svg s={9} vb="0 0 9 9"><path d="M1 4l2.500 3L8 1.500" stroke="#000" strokeWidth="2" /></Svg>
        </span>
      </span>
      {label}
    </label>
  </th>
);

function Tabular() {
  return (
    <section className="flex w-[518px] shrink-0 flex-col overflow-hidden">
      <div className="flex h-[25px] shrink-0 items-center bg-[#007acc] pr-2 pb-px pl-[5px] text-white">
        <h2 className="shrink-0 text-[14px]">Tabular Data</h2>
        <div className="ml-1 flex min-w-0 flex-1 items-center pr-1"><Dots c="#59a8de" /></div>
        <WinButtons c="#ffffff" />
      </div>
      <div className="flex min-h-0 flex-1 overflow-hidden bg-[#a0a0a0]">
        <div className="flex-1 overflow-hidden">
          <table className="w-[352px] table-fixed border-separate border-spacing-0 border-l border-[#a0a0a0] text-[11px] leading-[14px] text-black">
            <colgroup><col className="w-[20px]" /><col className="w-[46px]" /><col className="w-[97px]" /><col className="w-[98px]" /><col className="w-[90px]" /></colgroup>
            <thead>
              <tr className="h-[17px]">
                <th className="border-r border-b border-[#808080] bg-[#f0f0f0] p-0" />
                <th className="border-r border-b border-[#808080] bg-[#f0f0f0] p-0 pl-[2px] text-left font-normal whitespace-nowrap">Time [s]</th>
                <HeadCheck label="Minimum [Pa]" c="text-[#c00000]" />
                <HeadCheck label="Maximum [Pa]" c="text-[#008000]" />
                <HeadCheck label="Average [Pa]" c="text-[#0000c0]" />
              </tr>
            </thead>
            <tbody>
              {ROWS.map((r, i) => {
                const n = i + 19;
                const cell = n === 36 ? "border-[#8fc1f5] bg-[#3399ff] text-white" : "border-[#c0c0c0] bg-[#e8e6e2]";
                const inner = i === 0 ? "flex h-[6px] items-end overflow-hidden" : "h-[14px]";
                return (
                  <tr key={n}>
                    <td className="border-r border-b border-[#808080] bg-[#f0f0f0] p-0 pl-[2px]"><div className={inner}>{n}</div></td>
                    {r.map((v, k) => (
                      <td key={k} className={"border-r border-b p-0 pl-[3px] " + cell}><div className={inner}>{v}</div></td>
                    ))}
                  </tr>
                );
              })}
              <tr className="h-[4px]">
                <td className="border-r border-[#808080] bg-[#f0f0f0] p-0" />
                {[0, 1, 2, 3].map((k) => <td key={k} className="border-r border-[#c0c0c0] bg-[#e8e6e2] p-0" />)}
              </tr>
            </tbody>
          </table>
        </div>
        <div className="flex w-4 flex-col items-center bg-[#f0f0f0] py-1">
          <Chev />
          <div className="mt-[114px] h-48 w-full bg-[#cdcdcd]" />
          <div className="mt-auto"><Chev r={180} /></div>
        </div>
      </div>
    </section>
  );
}

/* ---------- status bar and task bar ---------- */

function StatusBar() {
  return (
    <footer className="flex h-5 shrink-0 items-center bg-[#007acc] pr-2 pl-2 text-[12px] whitespace-nowrap text-white">
      <span>Ready</span>
      <span className="ml-auto flex items-center gap-px">
        <Svg s={16} vb="0 0 17 17"><path d="M1 7h14v7H8l-4 3v-3H1z" fill="#ffe080" stroke="#c09020" strokeWidth=".7" /><circle cx="9.500" cy="5.500" r="5.500" fill="#1030d8" stroke="#fff" strokeWidth=".6" /><path d="M9.500 2v1.500M9.500 5v4M8 9h3" stroke="#fff" strokeWidth="1.600" /></Svg>
        3 Messages
      </span>
      <span className="ml-[15px]">No Selection</span>
      <span className="ml-[19px] flex items-center gap-[5px]">
        <Svg w={8} h={5} vb="0 0 8 5"><path d="M0 5h8L4 0z" fill="#fff" /></Svg>
        Metric (m, kg, N, s, V, A)
      </span>
      <span className="ml-[10px]">Degrees</span>
      <span className="ml-[10px]">rad/s</span>
      <span className="ml-[10px]">Celsius</span>
    </footer>
  );
}

const TaskButton = ({ name, open, active, children }: Kids & { name: string; open?: boolean; active?: boolean }) => (
  <button aria-label={name} className={"flex h-[39px] w-[59px] shrink-0 items-center justify-center border " + (active ? "border-[#f0f0f0] bg-[#a4a4a4]" : open ? "border-[#a0a0a0] bg-[#808080]" : "border-transparent")}>
    {children}
  </button>
);

function TaskBar() {
  return (
    <div className="flex h-10 shrink-0 items-center overflow-hidden bg-[#606060] text-white">
      <button aria-label="Start" className="flex w-[51px] shrink-0 justify-center">
        <Svg s={27} vb="0 0 27 27"><path d="M0 4l11-2v11H0zM12 1.800L27 0v13H12zM0 14h11v11L0 23.500zM12 14h15v13l-15-2z" fill="#fff" /></Svg>
      </button>
      <TaskButton name="Printer"><Svg w={32} h={24} vb="0 0 32 24"><path d="M1 8l19-7 11 4-2 10-18 8L3 17z" fill="#e4e4e4" /><path d="M1 8l10 5 20-8-2 10-18 8L3 17z" fill="#c4c4c4" /><path d="M6 7l13-5 8 3-13 5z" fill="#333" /></Svg></TaskButton>
      <div className="w-1" />
      <TaskButton name="Mendeley"><Svg s={28} vb="0 0 28 28"><circle cx="14" cy="14" r="13" fill="#b8c8d6" stroke="#dde8f0" /><path d="M3 10c6-6 8 0 6 8s8 8 12 0 2-14-4-12" stroke="#4a8aa8" strokeWidth="1.500" /><text x="14" y="20" fontSize="17" fontFamily="Liberation Serif" fontWeight="700" textAnchor="middle" fill="#b02020">M</text></Svg></TaskButton>
      <div className="w-[3px]" />
      <TaskButton name="Terminal"><Svg s={30} vb="0 0 30 30"><path d="M1 2h28v22H1z" fill="#2c2c2c" stroke="#ccc" strokeWidth="2" /><path d="M5 5l3 2-3 2M9 10h4" stroke="#eee" /><path d="M10 18l8-8 4 3-4 4 3 3-5 4z" fill="#f05828" /><path d="M22 12l6-1 1 6-4 3-5-3z" fill="#3a98e8" /><path d="M16 23l6-6 6 6-6 6z" fill="#5cc83c" /></Svg></TaskButton>
      <div className="w-[3px]" />
      <TaskButton name="Firefox"><Svg s={32} vb="0 0 32 32"><path d="M3 12l1-6 4 4 8-3 3-6c2 4 11 8 11 18a14 13 0 0 1-28 0c0-3 0-5 1-7z" fill="#ff8a1c" /><path d="M3 14l5-1-4-4C0 16 0 30 16 32c-8-3-13-8-13-18z" fill="#ff3c50" /><path d="M19 1c2 4 11 8 11 17l-5 3c3-10-8-13-6-20z" fill="#ffd83c" /><circle cx="16" cy="19" r="6.500" fill="#6a3ad0" /><path d="M8 13c4-3 8-1 8 2-3 0-3 3-6 3z" fill="#ffb020" /></Svg></TaskButton>
      <div className="w-[3px]" />
      <div className="flex gap-[3px]">
        <TaskButton open name="Chrome"><Svg s={29} vb="0 0 30 30"><circle cx="15" cy="15" r="15" fill="#fdd03b" /><path d="M15 15L2 7.500A15 15 0 0 1 28 7.500z" fill="#e0463c" /><path d="M15 15L2 7.500A15 15 0 0 0 15 30z" fill="#30a050" /><path d="M2 7.500A15 15 0 0 1 28 7.500H15L8.500 19z" fill="#e0463c" /><path d="M2 7.500l6.500 11.500L21 19l-6 11A15 15 0 0 1 2 7.500z" fill="#30a050" /><circle cx="15" cy="15" r="7.500" fill="#fff" /><circle cx="15" cy="15" r="6" fill="#3b78e8" /></Svg></TaskButton>
        <TaskButton open name="WPS Office"><Svg w={29} h={30} vb="0 0 29 30"><rect width="29" height="30" rx="3" fill="#2a86f0" /><path d="M5 9h5l3 12 4-10h-5M13 21l4-10 2 8M14 9h9.500l-4.500 12h-4" stroke="#fff" strokeWidth="1.800" /><rect x="18" y="19" width="9" height="9" rx="2" fill="#20b060" /><text x="22.500" y="26.500" fontSize="8" textAnchor="middle" fill="#fff">S</text></Svg></TaskButton>
        <TaskButton open name="File Explorer"><Svg w={32} h={30} vb="0 0 32 30"><path d="M2 2h10l2 3h16v22H2z" fill="#e8c860" /><path d="M4 1h6v4H4z" fill="#30b040" /><path d="M12 4h6v3h-6z" fill="#e05030" /><path d="M22 6h6v3h-6z" fill="#3080e0" /><path d="M1 10h29v17H1z" fill="#fae8a0" /><path d="M6 29v-8c0-3 3-4 5-4h12c3 0 5 1 5 4v8h-5v-6H11v6z" fill="#a8dcf4" stroke="#58a8d0" /></Svg></TaskButton>
        <TaskButton open name="Workbench"><Svg s={31} vb="0 0 31 31"><path d="M0 0h31v31H0z" fill="#b0b0b0" /><path d="M10 0h10l11 31H21L15 12 9 31H0z" fill="#757575" /><path d="M20 0h11v31z" fill="#ccc" /><text x="15.500" y="21" fontSize="15" fontWeight="700" textAnchor="middle" fill="#fff">WB</text></Svg></TaskButton>
        <TaskButton open active name="Mechanical"><MLogo s={31} /></TaskButton>
        <TaskButton open name="Photos"><Svg s={30} vb="0 0 32 32"><path d="M4 4h24v24H4z" fill="#3f8fd4" /><path d="M4 4h24v9H4z" fill="#6cb4ee" /><path d="M4 13c2-4 6-2 8-4s6 0 8-2 5-1 8-1v10H4z" fill="#f2f9ff" /><path d="M4 19c4-2 8-1 12-2s8-3 12-2v6H4z" fill="#2c6050" /><path d="M6 24h20" stroke="#78c0e8" strokeWidth="2" /><path d="M1.500 7V1.500H7M25 1.500h5.500V7M30.500 25v5.500H25M7 30.500H1.500V25" stroke="#48a4f0" strokeWidth="2" /></Svg></TaskButton>
      </div>
      <div className="ml-auto flex shrink-0 items-center pr-[17px] text-[12px]">
        <Svg w={8} h={5} vb="0 0 8 5"><path d="M0 5h8L4 0z" fill="#fff" /></Svg>
        <div className="ml-3"><Svg s={16}><path d="M1 2v4h4V2M3 6v10M2 0v3M4 0v3" stroke="#fff" strokeWidth="1.500" /><path d="M7.500 2.500h6v12h-6zM9 1h3" stroke="#fff" strokeWidth="1.600" /><path d="M9 5h3v8H9z" fill="#ddd" /></Svg></div>
        <div className="ml-2"><Svg s={16}><path d="M1.500 15v-2M4.500 15v-4M7.500 15V8M10.500 15V5M13.500 15V2" stroke="#fff" strokeWidth="2" /></Svg></div>
        <div className="ml-2"><Svg s={16}><path d="M1 5.500h3L9 1v14l-5-4.500H1z" fill="#fff" /><path d="M11.500 5.500c1.500 1.500 1.500 3.500 0 5" stroke="#ddd" strokeWidth="1.200" /></Svg></div>
        <span className="ml-[13px]">ENG</span>
        <span className="ml-3 text-center leading-[17px]">7:31 AM<br />19/1/2021</span>
      </div>
    </div>
  );
}

/* ---------- page ---------- */

export default function App() {
  return (
    <div className="flex h-screen flex-col overflow-hidden bg-[#eeeef2] font-['Open_Sans','Noto_Sans',sans-serif]">
      <TitleBar />
      <Ribbon />
      <main className="flex min-h-0 flex-1">
        <aside className="flex w-[120px] shrink-0 flex-col gap-1 overflow-hidden">
          <OutlinePanel />
          <DetailsPanel />
        </aside>
        <div className="ml-1 flex min-w-0 flex-1 flex-col">
          <ViewToolbar />
          <div className="flex h-[14px] shrink-0 items-start bg-linear-to-b from-[#6a8ae0] via-[#dfe6fa] via-65% to-[#eeeef2]">
            <div className="ml-[579px] flex h-[10px] items-start overflow-hidden">
              <span className="block h-[10px] border-l border-black bg-[#f00] pr-1 pl-[3px] text-[11px] leading-[8px] text-white">Max</span>
              <Svg w={18} h={10} vb="0 0 18 10"><path d="M0 0h13L5 10H0z" fill="#f00" /><path d="M13 0h5v7H7z" fill="#000" /><path d="M13 2h2v2h-2z" fill="#fff" /></Svg>
            </div>
          </div>
          <div className="flex min-h-0 flex-1 gap-[2px]">
            <Graph />
            <Tabular />
          </div>
        </div>
      </main>
      <StatusBar />
      <TaskBar />
    </div>
  );
}
